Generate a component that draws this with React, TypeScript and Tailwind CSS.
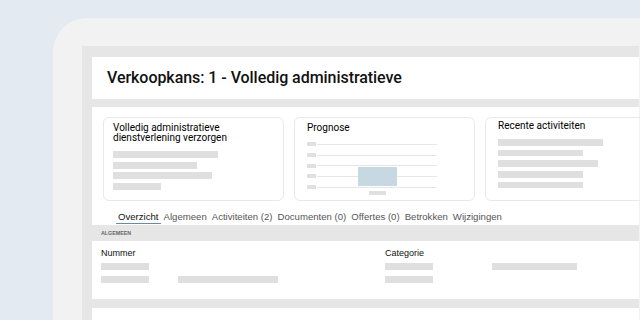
import React from "react";

const Bar = ({ w, h = "h-[7px]", className = "" }: { w: string; h?: string; className?: string }) => (
  <div className={`${w} ${h} bg-[#dfdfdf] ${className}`} />
);

const tabs = [
  "Overzicht",
  "Algemeen",
  "Activiteiten (2)",
  "Documenten (0)",
  "Offertes (0)",
  "Betrokken",
  "Wijzigingen",
];

export default function App() {
  const title = { fontFamily: "Roboto, 'Liberation Sans', sans-serif" };
  const ui = { fontFamily: "'Liberation Sans', Arial, sans-serif" };
  return (
    <div className="w-[640px] h-[320px] overflow-hidden bg-[#e3eaf1] pl-[53px] pt-[18px]">
      <div className="w-[600px] h-[400px] bg-[#f2f2f2] rounded-tl-[34px] pl-[29px] pt-[28px]">
        <div className="w-[557px] h-[400px] bg-[#e6e6e6] pl-[10px] pt-[11px] flex flex-col">
          {/* Header */}
          <div className="h-[42px] bg-white flex items-center pl-[15px]">
            <h1 className="text-[16px] font-medium text-[#111] leading-none tracking-[-0.05px]" style={title}>
              Verkoopkans: 1 - Volledig administratieve
            </h1>
          </div>

          {/* Main panel */}
          <div className="mt-[8px] h-[192px] bg-white pt-[10px] flex flex-col">
            <div className="flex gap-[10px] pl-[11px]">
              {/* Card 1 */}
              <div className="w-[181px] h-[84px] shrink-0 border border-[#e8e8e8] rounded-[6px] pl-[9px] pt-[4.5px]">
                <div className="text-[10px] leading-[10.3px] font-normal text-[#000]" style={title}>
                  Volledig administratieve
                  <br />
                  dienstverlening verzorgen
                </div>
                <div className="mt-[8px] flex flex-col gap-[3.67px]">
                  <Bar w="w-[105px]" />
                  <Bar w="w-[84px]" />
                  <Bar w="w-[99px]" />
                  <Bar w="w-[48px]" />
                </div>
              </div>

              {/* Card 2 */}
              <div className="w-[181px] h-[84px] shrink-0 border border-[#e8e8e8] rounded-[6px] pl-[12px] pt-[4.5px]">
                <div className="text-[10px] leading-[10.3px] font-normal text-[#000]" style={title}>
                  Prognose
                </div>
                <div className="relative mt-[9.6px] w-[131px]">
                  <div className="flex flex-col gap-[6.67px]">
                    {[0, 1, 2, 3, 4].map((i) => (
                      <div key={i} className="h-[4px] flex items-center">
                        <div className="w-[9px] h-[4px] bg-[#e0e0e0]" />
                        <div className="ml-[1px] w-[120px] h-[1px] bg-[#e6e6e6]" />
                      </div>
                    ))}
                  </div>
                  <div className="absolute left-[51px] top-[24.7px] w-[39px] h-[19px] bg-[#c8d8e2]" />
                  <div className="ml-[62px] mt-[2.3px] w-[17px] h-[4px] bg-[#e0e0e0]" />
                </div>
              </div>

              {/* Card 3 */}
              <div className="w-[181px] h-[84px] shrink-0 border border-[#e8e8e8] rounded-[6px] pl-[12px] pt-[3px]">
                <div className="text-[10px] leading-[10.3px] font-normal text-[#000]" style={title}>
                  Recente activiteiten
                </div>
                <div className="mt-[8px] flex flex-col gap-[4px]">
                  <Bar w="w-[105px]" h="h-[6.6px]" />
                  <Bar w="w-[85px]" h="h-[6.6px]" />
                  <Bar w="w-[100px]" h="h-[6.6px]" />
                  <Bar w="w-[85px]" h="h-[6.6px]" />
                  <Bar w="w-[85px]" h="h-[6.6px]" />
                </div>
              </div>
            </div>

            {/* Tabs */}
            <div className="mt-[9.7px] flex pl-[24px] gap-[1px] text-[9.6px] leading-[12px]" style={ui}>
              {tabs.map((t, i) => (
                <div
                  key={t}
                  className={
                    i === 0
                      ? "px-[2px] border-b-[1.5px] border-[#6d8aa0] text-[#111]"
                      : "px-[2px] border-b-[1.5px] border-transparent text-[#555]"
                  }
                >
                  {t}
                </div>
              ))}
            </div>

            {/* Section band */}
            <div className="mt-[1.8px] h-[16px] bg-[#e6e6e6] flex items-center pl-[9px]">
              <span className="text-[5.3px] font-bold text-[#666] uppercase leading-none" style={ui}>
                Algemeen
              </span>
            </div>

            {/* Fields */}
            <div className="grid grid-cols-[284px_1fr] pl-[9px] pt-[6.5px]" style={ui}>
              <div>
                <div className="text-[9px] leading-[11px] text-[#111]">Nummer</div>
                <div className="mt-[4.5px] flex flex-col gap-[6.5px]">
                  <Bar w="w-[48px]" h="h-[6.5px]" />
                  <div className="flex">
                    <Bar w="w-[48px]" h="h-[6.5px]" />
                    <Bar w="w-[100px]" h="h-[6.5px]" className="ml-[29px]" />
                  </div>
                </div>
              </div>
              <div>
                <div className="text-[9px] leading-[11px] text-[#111]">Categorie</div>
                <div className="mt-[4.5px] flex flex-col gap-[6.5px]">
                  <div className="flex">
                    <Bar w="w-[48px]" h="h-[6.5px]" />
                    <Bar w="w-[85px]" h="h-[6.5px]" className="ml-[59px]" />
                  </div>
                  <Bar w="w-[48px]" h="h-[6.5px]" />
                </div>
              </div>
            </div>
          </div>

          {/* Bottom panel */}
          <div className="mt-[9px] h-[100px] bg-white" />
        </div>
      </div>
    </div>
  );
}
